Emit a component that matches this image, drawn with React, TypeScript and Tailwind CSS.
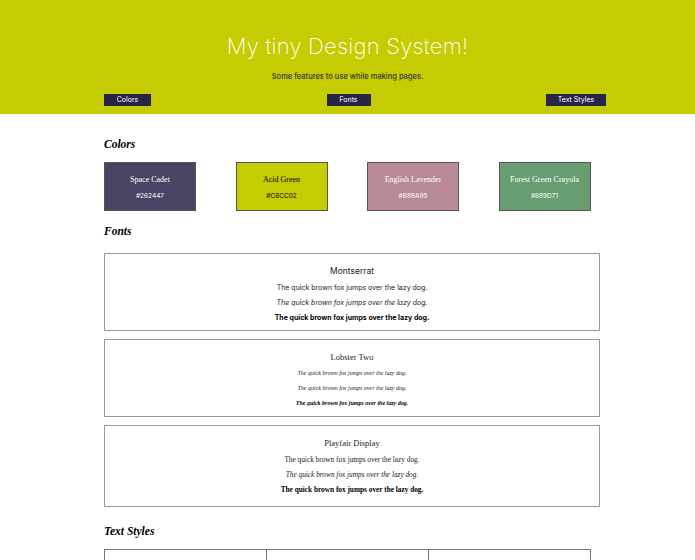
import React from 'react';

const colors = [
    { name: 'Space Cadet', hex: '#262447', bg: 'bg-[#484564]', text: 'text-white' },
    { name: 'Acid Green', hex: '#C6CC02', bg: 'bg-[#c6cc02]', text: 'text-black' },
    { name: 'English Lavender', hex: '#B88A95', bg: 'bg-[#b88a95]', text: 'text-white' },
    { name: 'Forest Green Crayola', hex: '#689D71', bg: 'bg-[#689d71]', text: 'text-white' },
];

const sample = 'The quick brown fox jumps over the lazy dog.';

const fonts = [
    {
        name: 'Montserrat',
        title: "font-['Inter',sans-serif]",
        lines: [
            "font-['Inter',sans-serif] text-[7px]",
            "font-['Inter',sans-serif] italic text-[7px]",
            "font-['Inter',sans-serif] font-bold text-[7px]",
        ],
    },
    {
        name: 'Lobster Two',
        title: "font-['Liberation_Serif',serif]",
        lines: [
            "font-['Liberation_Serif',serif] italic text-[6px]",
            "font-['Liberation_Serif',serif] italic text-[6px]",
            "font-['Liberation_Serif',serif] italic font-bold text-[6px]",
        ],
    },
    {
        name: 'Playfair Display',
        title: "font-['Liberation_Serif',serif]",
        lines: [
            "font-['Liberation_Serif',serif] text-[7.3px]",
            "font-['Liberation_Serif',serif] italic text-[7.3px]",
            "font-['Liberation_Serif',serif] font-bold text-[7.3px]",
        ],
    },
];

const script = "font-['Liberation_Serif',serif] italic font-bold";

const App: React.FC = () => {
    return (
        <div className="min-h-[560px] bg-white text-black">
            {/* Header */}
            <header className="bg-[#c6cc02] h-[114px] pt-[33px] font-['Inter',sans-serif]">
                <h1 className="text-center text-white font-extralight text-[22px] leading-[26px] tracking-[0.01em]">
                    My tiny Design System!
                </h1>
                <p className="text-center text-[#333] font-medium text-[7.5px] mt-[13px] leading-[10px]">
                    Some features to use while making pages.
                </p>
                <nav className="flex justify-between mt-[12px] ml-[104px] mr-[89px]">
                    <button className="bg-[#262447] text-white text-[7px] h-[12px] w-[47px] leading-[12px]">Colors</button>
                    <button className="bg-[#262447] text-white text-[7px] h-[12px] w-[44px] leading-[12px]">Fonts</button>
                    <button className="bg-[#262447] text-white text-[7px] h-[12px] w-[60px] leading-[12px]">Text Styles</button>
                </nav>
            </header>

            <main className="ml-[104px] w-[496px]">
                {/* Colors */}
                <h2 className={`${script} text-[11.5px] mt-[22px] leading-[16px]`}>Colors</h2>
                <div className="flex gap-[39.5px] mt-[10px]">
                    {colors.map((c) => (
                        <div
                            key={c.name}
                            className={`${c.bg} ${c.text} w-[92px] h-[49px] border border-[#555] flex flex-col items-center pt-[12px]`}
                        >
                            <span className="font-['Liberation_Serif',serif] text-[8px] leading-[10px]">{c.name}</span>
                            <span className="font-['Inter',sans-serif] text-[6.5px] leading-[8px] mt-[7px]">{c.hex}</span>
                        </div>
                    ))}
                </div>

                {/* Fonts */}
                <h2 className={`${script} text-[11.5px] mt-[12px] leading-[16px]`}>Fonts</h2>
                <div className="flex flex-col gap-[8px] mt-[14px]">
                    {fonts.map((f, i) => (
                        <div
                            key={f.name}
                            className={`border border-[#999] flex flex-col items-center pt-[12px] ${i === 2 ? 'h-[82px]' : 'h-[78px]'}`}
                        >
                            <span className={`${f.title} text-[8.5px] leading-[11px] text-[#222]`}>{f.name}</span>
                            <span className={`${f.lines[0]} leading-[9px] mt-[6px] text-[#222]`}>{sample}</span>
                            <span className={`${f.lines[1]} leading-[9px] mt-[6px] text-[#222]`}>{sample}</span>
                            <span className={`${f.lines[2]} leading-[9px] mt-[6px] text-black`}>{sample}</span>
                        </div>
                    ))}
                </div>

                {/* Text Styles */}
                <h2 className={`${script} text-[11.5px] mt-[16px] leading-[16px]`}>Text Styles</h2>
                <div className="grid grid-cols-3 w-[487px] mt-[10px] h-[20px] border-t border-l border-[#777]">
                    <div className="border-r border-[#777]" />
                    <div className="border-r border-[#777]" />
                    <div className="border-r border-[#777]" />
                </div>
            </main>
        </div>
    );
};

export default App;
